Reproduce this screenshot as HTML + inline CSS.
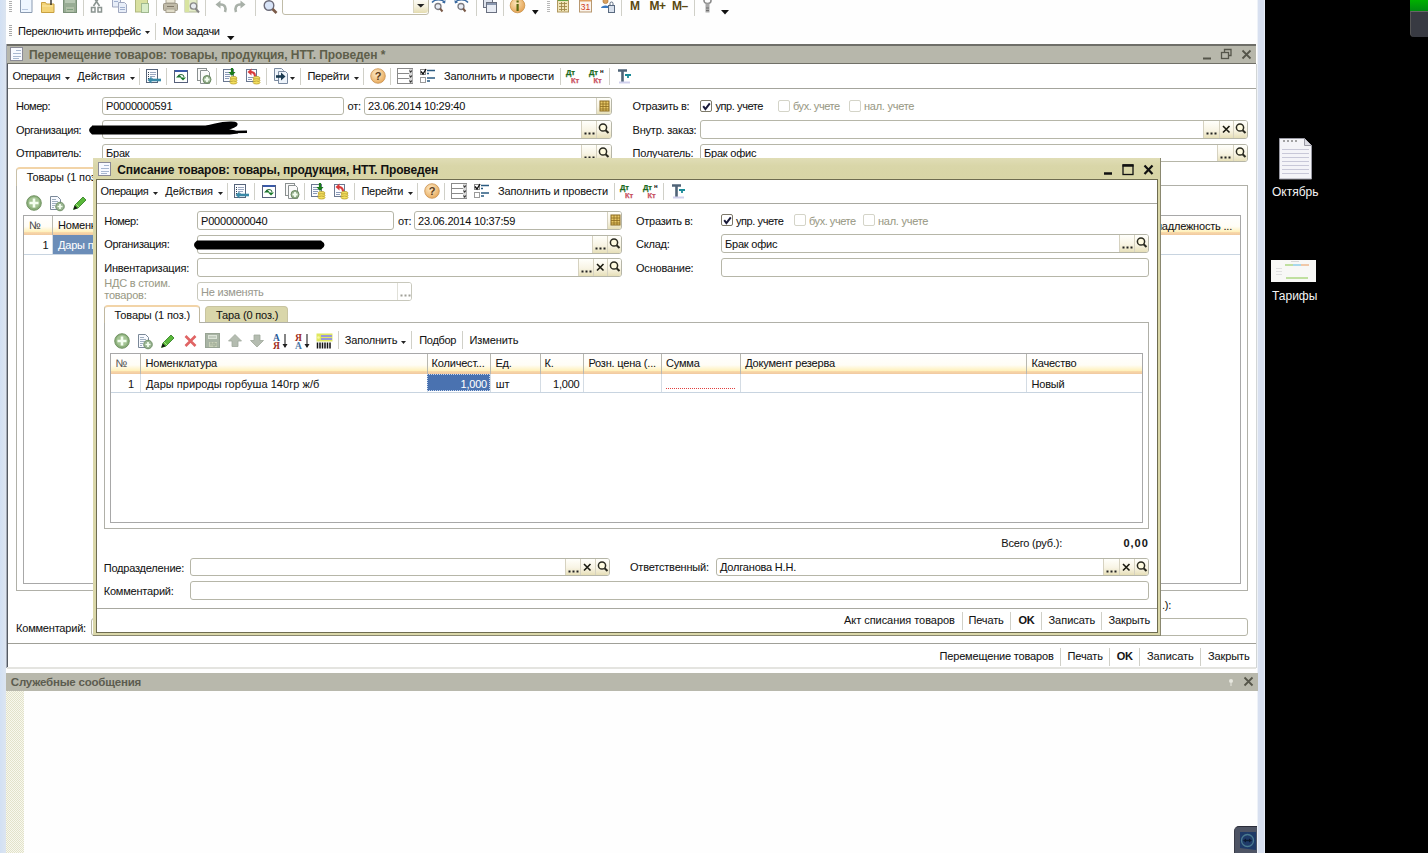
<!DOCTYPE html><html><head><meta charset="utf-8"><style>
*{margin:0;padding:0;box-sizing:content-box}
html,body{width:1428px;height:853px;overflow:hidden;background:#000}
body{position:relative;font-family:"Liberation Sans",sans-serif}
.a{position:absolute}
.t{position:absolute;font-size:11px;line-height:13px;letter-spacing:-0.2px;color:#141414;white-space:nowrap;-webkit-text-stroke:0.06px currentColor}
.g{color:#9a9a86}
.b{font-weight:bold}
.inp{position:absolute;border:1px solid #b6b6a8;border-radius:3px;background:#fff;overflow:hidden}
.ib{position:absolute;top:0;box-sizing:border-box;background:linear-gradient(#fffffb 0%,#f8f4e4 55%,#e6dfb8 100%);border-left:1px solid #d6d2c0}
.cb{position:absolute;width:10px;height:10px;border:1px solid #807c68;border-radius:2px;background:#fff}
</style></head><body>
<div class="a" style="left:1410px;top:0px;width:18px;height:11px;background:linear-gradient(#00b000,#008a10)"></div>
<div class="a" style="left:1410px;top:11px;width:18px;height:26px;background:#383a42;border-top:1px solid #666;border-left:1px solid #555;border-bottom-left-radius:4px;box-sizing:border-box"></div>
<svg class="a" style="left:1278px;top:137px" width="36" height="46"><path d="M1.5 1.5h25l7 7v33.5h-32z" fill="#f4f4f8" stroke="#9a9aa4"/><path d="M26.5 1.5v7h7" fill="#dcdce4" stroke="#9a9aa4"/><path d="M4 12.5h27M4 16.5h27M4 20.5h27M4 24.5h27M4 28.5h27M4 32.5h27M4 36.5h27" stroke="#c8c8d8"/><circle cx="6" cy="4" r="1" fill="#888"/><circle cx="10" cy="4" r="1" fill="#888"/><circle cx="14" cy="4" r="1" fill="#888"/><circle cx="18" cy="4" r="1" fill="#888"/></svg>
<div class="a" style="left:1272px;top:185px;font:12px/14px 'Liberation Sans';color:#f4f4f4">Октябрь</div>
<svg class="a" style="left:1271px;top:260px" width="46" height="22"><rect x="0" y="0" width="45" height="22" fill="#f8f8f6"/><rect x="14" y="4" width="8" height="2" fill="#c0e0a0"/><rect x="22" y="4" width="8" height="2" fill="#a8d8ec"/><rect x="30" y="4" width="8" height="2" fill="#f0c8a8"/><rect x="15" y="17" width="22" height="2" fill="#c0e0a0"/><path d="M5 8.5h6M5 11.5h6M5 14.5h6" stroke="#e0e0e0"/><rect x="20" y="1" width="8" height="1" fill="#d8d8d8"/></svg>
<div class="a" style="left:1272px;top:289px;font:12px/14px 'Liberation Sans';color:#f4f4f4">Тарифы</div>
<div class="a" style="left:0px;top:0px;width:6px;height:853px;background:linear-gradient(90deg,#d2e0f4,#dce5f0)"></div>
<div class="a" style="left:1257px;top:0px;width:8px;height:853px;background:linear-gradient(90deg,#eef2f8 0 1px,#d8e0f0 1px 7px,#e8eef8 7px)"></div>
<div class="a" style="left:6px;top:0px;width:1251px;height:853px;background:#fefefe"></div>
<svg class="a" style="left:9px;top:0" width="3" height="13"><path d="M0 1.5h3M0 3.5h3M0 5.5h3M0 7.5h3M0 9.5h3M0 11.5h3" stroke="#b0b0b0"/></svg>
<svg class="a" style="left:18.5px;top:0px;overflow:visible" width="16" height="16"><path d="M1.5 -4h8.5l3 3v13.5h-11.5z" fill="#eef6ff" stroke="#8a9ab0"/><path d="M3 9.5h6" stroke="#b8c8e0"/></svg>
<svg class="a" style="left:40px;top:0px;overflow:visible" width="16" height="16"><path d="M1.5 2.5h4l1 1.5h7.5v8.5h-12.5z" fill="#f4d478" stroke="#c8a040"/><path d="M2 6h11" stroke="#fae8a8"/><path d="M11 -3v8" stroke="#1a1a1a" stroke-width="1.3"/><path d="M9 -1l2-2.5 2 2.5z" fill="#1a1a1a"/></svg>
<svg class="a" style="left:62px;top:0px;overflow:visible" width="16" height="16"><rect x="1.5" y="-4" width="13" height="16.5" fill="#98ac94" stroke="#7a9078"/><rect x="3" y="-3" width="10" height="6" fill="#b8c8b4"/><rect x="4" y="7" width="8" height="5" fill="#b0c0a8"/><path d="M5 9.5h6" stroke="#80a080"/></svg>
<svg class="a" style="left:90px;top:0px;overflow:visible" width="16" height="16"><path d="M3.5 -3l6 9M9.5 -3l-6 9" stroke="#8a9490" stroke-width="1.6"/><rect x="1.5" y="7.5" width="3.5" height="4.5" fill="none" stroke="#8a9490" stroke-width="1.5"/><rect x="8" y="7.5" width="3.5" height="4.5" fill="none" stroke="#8a9490" stroke-width="1.5"/></svg>
<svg class="a" style="left:111px;top:0px;overflow:visible" width="16" height="16"><path d="M1.5 -3.5h6l2 2v8.5h-8z" fill="#e8eef8" stroke="#a0a8c0"/><path d="M7.5 2.5h6l2 2v8h-8z" fill="#e8eef8" stroke="#a0a8c0"/><path d="M3 1.5h4M9 7.5h5M9 9.5h5" stroke="#a0b0d0"/></svg>
<svg class="a" style="left:134px;top:0px;overflow:visible" width="16" height="16"><rect x="1.5" y="-3" width="12" height="15" fill="#d8e0a0" stroke="#b0b880"/><rect x="7.5" y="3.5" width="7" height="9" fill="#d8ecc8" stroke="#a0b890"/><rect x="5" y="-3" width="5" height="3" fill="#e8c890"/></svg>
<svg class="a" style="left:162px;top:0px;overflow:visible" width="16" height="16"><rect x="1.5" y="3.5" width="14" height="7" rx="1" fill="#c0baa8" stroke="#9a9484"/><rect x="4" y="-3" width="9" height="6" fill="#ece8d8" stroke="#aaa494"/><rect x="4" y="9" width="9" height="3.5" fill="#e0dcc8" stroke="#aaa494"/><path d="M5 6.5h7" stroke="#807868"/></svg>
<svg class="a" style="left:184px;top:0px;overflow:visible" width="16" height="16"><rect x="1" y="-3" width="12" height="15" fill="#e4ecc8" stroke="#b0b898"/><rect x="1" y="-3" width="4" height="15" fill="#d8e4a0"/><circle cx="9.5" cy="6" r="3.2" fill="#e8ecf0" stroke="#888" stroke-width="1.3"/><path d="M11.5 8.5l3.5 4" stroke="#888" stroke-width="2"/></svg>
<svg class="a" style="left:214px;top:0px;overflow:visible" width="16" height="16"><path d="M11 12c1.5-4 0-8-5-7.5" stroke="#a8b0a8" stroke-width="2.6" fill="none"/><path d="M1.5 4.5l5-4v8z" fill="#a8b0a8"/></svg>
<svg class="a" style="left:235px;top:0px;overflow:visible" width="16" height="16"><path d="M1 12c-1.5-4 0-8 5-7.5" stroke="#a8b0a8" stroke-width="2.6" fill="none"/><path d="M10.5 4.5l-5-4v8z" fill="#a8b0a8"/></svg>
<svg class="a" style="left:263px;top:0px;overflow:visible" width="16" height="16"><circle cx="6" cy="5.5" r="4.8" fill="#d8e4f8" stroke="#6a6a78" stroke-width="1.4"/><path d="M9.5 9l4 4" stroke="#7a5a48" stroke-width="2.6"/></svg>
<div class="a" style="left:83px;top:0px;width:1px;height:16px;background:#d0d0c8"></div>
<div class="a" style="left:156px;top:0px;width:1px;height:16px;background:#d0d0c8"></div>
<div class="a" style="left:205px;top:0px;width:1px;height:16px;background:#d0d0c8"></div>
<div class="a" style="left:255px;top:0px;width:1px;height:16px;background:#d0d0c8"></div>
<div class="a" style="left:282px;top:-4px;width:145px;height:17px;background:#fff;border:1px solid #c0bca8;border-radius:3px"></div>
<div class="a" style="left:413px;top:-3px;width:14px;height:16px;background:linear-gradient(#fff,#f4f0dc 60%,#e4dcb0);border-left:1px solid #d8d4c0;border-radius:0 0 3px 0"></div>
<svg class="a" style="left:417px;top:4px" width="8" height="4"><path d="M0 0h7.5L3.75 3.5z" fill="#222"/></svg>
<svg class="a" style="left:431px;top:0px;overflow:visible" width="16" height="16"><path d="M1 2.5c3-3.5 10-3.5 13 0" stroke="#3a6aa0" stroke-width="1.4" fill="none"/><path d="M14.5 0l-0.5 3.5-3 -1z" fill="#3a6aa0"/><circle cx="7" cy="6.5" r="3" fill="#e8ecf4" stroke="#7a7a80" stroke-width="1.3"/><path d="M9 8.5l2.5 3" stroke="#7a5a48" stroke-width="2"/></svg>
<svg class="a" style="left:454px;top:0px;overflow:visible" width="16" height="16"><path d="M1 2.5c3-3.5 10-3.5 13 0" stroke="#3a6aa0" stroke-width="1.4" fill="none"/><path d="M0.5 0l0.5 3.5 3-1z" fill="#3a6aa0"/><circle cx="7" cy="6.5" r="3" fill="#e8ecf4" stroke="#7a7a80" stroke-width="1.3"/><path d="M9 8.5l2.5 3" stroke="#7a5a48" stroke-width="2"/></svg>
<svg class="a" style="left:482px;top:0px;overflow:visible" width="16" height="16"><rect x="1.5" y="-1.5" width="9" height="9" fill="#dde2ec" stroke="#6a7080"/><rect x="4.5" y="2.5" width="10" height="10" fill="#e8ecf4" stroke="#6a7080"/><rect x="5" y="3" width="9" height="2" fill="#8a98b0"/></svg>
<svg class="a" style="left:510px;top:0px;overflow:visible" width="16" height="16"><defs><radialGradient id="ig" cx="0.4" cy="0.35" r="0.7"><stop offset="0" stop-color="#fbe4b8"/><stop offset="1" stop-color="#e4a050"/></radialGradient></defs><circle cx="7.5" cy="5.5" r="7.3" fill="url(#ig)" stroke="#c89048" stroke-width="0.8"/><rect x="6.5" y="4" width="2.2" height="7" fill="#5a6a10"/><rect x="6.5" y="0.5" width="2.2" height="2" fill="#5a6a10"/></svg>
<svg class="a" style="left:556px;top:0px;overflow:visible" width="16" height="16"><rect x="1.5" y="-2.5" width="11" height="14.5" fill="#f0e4b8" stroke="#b09860"/><rect x="2" y="-2" width="10" height="3" fill="#60a040"/><path d="M3 3.5h8M3 6.5h8M3 9.5h8M5.5 2v9M8.5 2v9" stroke="#a08848" stroke-width="0.9"/></svg>
<svg class="a" style="left:578px;top:0px;overflow:visible" width="16" height="16"><rect x="1.5" y="-1.5" width="12" height="13.5" fill="#fbf4ec" stroke="#b89870"/><rect x="2" y="-1" width="11" height="2.5" fill="#e0a060"/><text x="7.5" y="10" font-family="Liberation Sans" font-size="8.5" text-anchor="middle" fill="#d03a20">31</text></svg>
<svg class="a" style="left:600px;top:0px;overflow:visible" width="16" height="16"><circle cx="5.5" cy="1" r="2.6" fill="#d8a060" stroke="#a87030" stroke-width="0.6"/><path d="M1 8c0-3.5 9-3.5 9 0z" fill="#3a78c0"/><rect x="8.5" y="5.5" width="6" height="7" fill="#d8e0ec" stroke="#5a6a80"/><path d="M10 5.5v-2a1.5 1.5 0 0 1 3 0v2" fill="none" stroke="#5a6a80"/></svg>
<div class="a" style="left:476px;top:0px;width:1px;height:16px;background:#d0d0c8"></div>
<div class="a" style="left:503px;top:0px;width:1px;height:16px;background:#d0d0c8"></div>
<div class="a" style="left:621px;top:0px;width:1px;height:16px;background:#d0d0c8"></div>
<div class="a" style="left:694px;top:0px;width:1px;height:16px;background:#d0d0c8"></div>
<svg class="a" style="left:532px;top:10px" width="7" height="5"><path d="M0 0h6.6L3.3 4.4z" fill="#111"/></svg>
<svg class="a" style="left:547px;top:0px" width="3" height="13"><path d="M0 1.5h3M0 3.5h3M0 5.5h3M0 7.5h3M0 9.5h3M0 11.5h3" stroke="#b8b8b8"/></svg>
<div class="a" style="left:630px;top:-2px;font:bold 12px/16px 'Liberation Sans';color:#5a4810;letter-spacing:-0.3px">M</div>
<div class="a" style="left:649.5px;top:-2px;font:bold 12px/16px 'Liberation Sans';color:#5a4810;letter-spacing:-0.5px">M+</div>
<div class="a" style="left:672px;top:-2px;font:bold 12px/16px 'Liberation Sans';color:#5a4810;letter-spacing:-0.5px">M–</div>
<svg class="a" style="left:701px;top:0px;overflow:visible" width="16" height="16"><ellipse cx="6.5" cy="0.5" rx="3.5" ry="3" fill="none" stroke="#8a8a8a" stroke-width="1.6"/><path d="M6.5 3.5v9" stroke="#a8a8a8" stroke-width="4"/><path d="M5 8h3M5 10.5h3" stroke="#707070"/></svg>
<svg class="a" style="left:721px;top:10px" width="9" height="5"><path d="M0 0h8L4 4.4z" fill="#111"/></svg>
<svg class="a" style="left:9px;top:24px" width="3" height="14"><path d="M0 1.5h3M0 3.5h3M0 5.5h3M0 7.5h3M0 9.5h3M0 11.5h3" stroke="#a8a8a8"/></svg>
<div class="t " style="left:18px;top:24.5px;letter-spacing:-0.226px;">Переключить интерфейс</div>
<svg class="a" style="left:145px;top:30.5px" width="6" height="4"><path d="M0 0h5L2.5 3z" fill="#222"/></svg>
<div class="a" style="left:155px;top:23px;width:1px;height:17px;background:#d0d0c8"></div>
<div class="t " style="left:162.7px;top:24.5px;letter-spacing:-0.293px;">Мои задачи</div>
<svg class="a" style="left:227px;top:35.5px" width="8" height="5"><path d="M0 0h7.5L3.75 4.2z" fill="#111"/></svg>
<div class="a" style="left:7px;top:44px;width:1249px;height:624px;background:#fff"></div>
<div class="a" style="left:7px;top:44px;width:1px;height:624px;background:#545a62"></div>
<div class="a" style="left:6px;top:44px;width:1px;height:624px;background:#a4aab6"></div>
<div class="a" style="left:7px;top:44px;width:1249px;height:19px;background:#b7b7ab"></div>
<div class="a" style="left:7px;top:44px;width:1249px;height:2px;background:#6e6e68"></div>
<div class="a" style="left:7px;top:63px;width:1249px;height:1px;background:#707068"></div>
<svg class="a" style="left:10px;top:47px;overflow:visible" width="13" height="14"><rect x="0.5" y="0.5" width="12" height="13" fill="#f8faff" stroke="#8a8a96"/><path d="M6 3.5h5M3 6.5h8M3 9.5h8M3 11.5h6" stroke="#a8b8d0"/></svg>
<div class="t b" style="left:29px;top:47.5px;-webkit-text-stroke:0;font-size:12px;line-height:14px;color:#5e5e4a;letter-spacing:-0.06px">Перемещение товаров: товары, продукция, НТТ. Проведен *</div>
<svg class="a" style="left:1200px;top:47px" width="56" height="16"><path d="M3 11.5h8" stroke="#55554a" stroke-width="2"/><rect x="21.5" y="5.5" width="7" height="6" fill="none" stroke="#55554a" stroke-width="1.3"/><path d="M24.5 5V2.5h6.5v6H29" fill="none" stroke="#55554a" stroke-width="1.3"/><path d="M42.5 3.5l8 8M50.5 3.5l-8 8" stroke="#55554a" stroke-width="1.8"/></svg>
<div class="a" style="left:8px;top:88px;width:1248px;height:1px;background:#a4a49c"></div>
<div class="t " style="left:12.6px;top:70.0px;letter-spacing:-0.440px;">Операция</div>
<svg class="a" style="left:65px;top:76.5px" width="6" height="4"><path d="M0 0h5L2.5 3z" fill="#222"/></svg>
<div class="t " style="left:77.3px;top:70.0px;letter-spacing:-0.072px;">Действия</div>
<svg class="a" style="left:129.5px;top:76.5px" width="6" height="4"><path d="M0 0h5L2.5 3z" fill="#222"/></svg>
<div class="a" style="left:139px;top:68px;width:1px;height:17px;background:#d0d0c8"></div>
<svg class="a" style="left:145px;top:68px;overflow:visible" width="16" height="16"><rect x="1.5" y="1.5" width="11" height="13" fill="#fbfcff" stroke="#56647a"/><path d="M3 4.5h1M3 6.5h1M3 8.5h1M3 10.5h1" stroke="#304050"/><path d="M5 4.5h6M5 6.5h6M5 8.5h5M5 10.5h3" stroke="#9aa8c0"/><path d="M5 12h11" stroke="#3a8aa8" stroke-width="2.6"/><path d="M2.5 12l4-3.5v7z" fill="#3a8aa8"/></svg>
<div class="a" style="left:166px;top:68px;width:1px;height:17px;background:#d0d0c8"></div>
<svg class="a" style="left:173px;top:68px;overflow:visible" width="16" height="16"><rect x="1.5" y="2.5" width="13" height="12" fill="#fff" stroke="#56607a"/><rect x="2" y="2" width="12" height="2" fill="#3a5aa8"/><path d="M3 9.5l3-3 3 3z" fill="#1a7a2a"/><path d="M7 9.5l3 3 3-3z" fill="#1a7a2a"/><path d="M5 9a3 2.5 0 0 1 6 0" stroke="#2a6a3a" fill="none"/></svg>
<svg class="a" style="left:196px;top:68px;overflow:visible" width="16" height="16"><rect x="1.5" y="0.5" width="9" height="12" fill="#fafafa" stroke="#8a9090"/><path d="M4.5 2.5h7l2 2v11h-9z" fill="#fbfbfb" stroke="#8a9090"/><circle cx="11" cy="11.5" r="4" fill="#98b090" stroke="#6a8a60"/><path d="M8.5 11.5h5M11 9v5" stroke="#f4fff0" stroke-width="1.8"/></svg>
<div class="a" style="left:216px;top:68px;width:1px;height:17px;background:#d0d0c8"></div>
<svg class="a" style="left:222px;top:68px;overflow:visible" width="16" height="16"><rect x="1.5" y="1.5" width="10" height="12" fill="#fbfcff" stroke="#6a7890"/><path d="M3 4.5h6M3 6.5h6M3 8.5h5M3 10.5h4" stroke="#8a9ab8"/><path d="M10 0v5" stroke="#1a7a1a" stroke-width="2.2"/><path d="M6.5 4l3.5 4 3.5-4z" fill="#1a7a1a"/><ellipse cx="11.5" cy="10" rx="3.5" ry="1.6" fill="#f4e060" stroke="#b8a030" stroke-width="0.8"/><ellipse cx="11.5" cy="12.3" rx="3.5" ry="1.6" fill="#f4e060" stroke="#b8a030" stroke-width="0.8"/><ellipse cx="11.5" cy="14.5" rx="3.5" ry="1.5" fill="#f4e060" stroke="#b8a030" stroke-width="0.8"/></svg>
<svg class="a" style="left:245px;top:68px;overflow:visible" width="16" height="16"><rect x="1.5" y="1.5" width="10" height="12" fill="#fbfcff" stroke="#6a7890"/><path d="M3 9.5h5M3 11.5h4" stroke="#8a9ab8"/><path d="M10 8.5c0-3-1.5-4.5-4.5-4.5" stroke="#d83a3a" stroke-width="2.2" fill="none"/><path d="M2.5 4l4-3.5v7z" fill="#d83a3a"/><ellipse cx="11.5" cy="10" rx="3.5" ry="1.6" fill="#f4e060" stroke="#b8a030" stroke-width="0.8"/><ellipse cx="11.5" cy="12.3" rx="3.5" ry="1.6" fill="#f4e060" stroke="#b8a030" stroke-width="0.8"/><ellipse cx="11.5" cy="14.5" rx="3.5" ry="1.5" fill="#f4e060" stroke="#b8a030" stroke-width="0.8"/></svg>
<div class="a" style="left:266px;top:68px;width:1px;height:17px;background:#d0d0c8"></div>
<svg class="a" style="left:273px;top:68px;overflow:visible" width="16" height="16"><path d="M1.5 0.5h7l2 2v10h-9z" fill="#eef4fb" stroke="#7a8aa0"/><path d="M5.5 3.5h7l2 2v10h-9z" fill="#eef4fb" stroke="#7a8aa0"/><path d="M3 8.5h6" stroke="#1a3a50" stroke-width="2.6"/><path d="M8 4.5l4.5 4-4.5 4z" fill="#1a3a50"/></svg>
<svg class="a" style="left:290px;top:76.5px" width="6" height="4"><path d="M0 0h5L2.5 3z" fill="#222"/></svg>
<div class="a" style="left:300px;top:68px;width:1px;height:17px;background:#d0d0c8"></div>
<div class="t " style="left:307.4px;top:70.0px;letter-spacing:-0.249px;">Перейти</div>
<svg class="a" style="left:353.5px;top:76.5px" width="6" height="4"><path d="M0 0h5L2.5 3z" fill="#222"/></svg>
<div class="a" style="left:363px;top:68px;width:1px;height:17px;background:#d0d0c8"></div>
<svg class="a" style="left:369.5px;top:68px;overflow:visible" width="16" height="16"><defs><radialGradient id="hg" cx="0.4" cy="0.35" r="0.7"><stop offset="0" stop-color="#fdebc8"/><stop offset="1" stop-color="#e8a858"/></radialGradient></defs><circle cx="8" cy="8" r="7.3" fill="url(#hg)" stroke="#c89050" stroke-width="0.8"/><text x="8" y="12" font-family="Liberation Sans" font-size="11" font-weight="bold" text-anchor="middle" fill="#5a3a1a">?</text></svg>
<div class="a" style="left:390px;top:68px;width:1px;height:17px;background:#d0d0c8"></div>
<svg class="a" style="left:397px;top:68px;overflow:visible" width="16" height="16"><rect x="0.5" y="0.5" width="15" height="15" fill="#fff" stroke="#8a8a8a"/><path d="M1 5.5h14M1 10.5h14" stroke="#8a8a8a"/><rect x="12" y="1" width="3.5" height="14" fill="#d8d8d8"/><path d="M12.5 2.5l1.2 1.5 1.2-1.5M12.5 7.5l1.2 1.5 1.2-1.5M12.5 12.5l1.2 1.5 1.2-1.5" stroke="#303030" stroke-width="1.1" fill="none"/></svg>
<svg class="a" style="left:420px;top:68px;overflow:visible" width="16" height="16"><rect x="0.5" y="1.5" width="5" height="5" fill="#fff" stroke="#8a8a8a"/><path d="M1 3.5l2 2.5 3-5" stroke="#111" stroke-width="1.4" fill="none"/><rect x="0.5" y="9.5" width="5" height="5" fill="#fff" stroke="#9a9a9a"/><path d="M7 2.5h8M7 5.5h2M7 10h8M7 13h3" stroke="#2a5a80" stroke-width="1.6"/></svg>
<div class="t " style="left:444px;top:70.0px;letter-spacing:-0.152px;">Заполнить и провести</div>
<div class="a" style="left:560px;top:68px;width:1px;height:17px;background:#d0d0c8"></div>
<svg class="a" style="left:566px;top:68px;overflow:visible" width="16" height="16"><text x="0" y="7" font-family="Liberation Sans" font-size="7.5" font-weight="bold" fill="#1a6a20" stroke="#1a6a20" stroke-width="0.25">Дт</text><text x="5" y="14.8" font-family="Liberation Sans" font-size="7.5" font-weight="bold" fill="#c85060" stroke="#c85060" stroke-width="0.25">Кт</text></svg>
<svg class="a" style="left:589px;top:68px;overflow:visible" width="16" height="16"><text x="0" y="7" font-family="Liberation Sans" font-size="7.5" font-weight="bold" fill="#1a6a20" stroke="#1a6a20" stroke-width="0.25">Дт</text><text x="11" y="4.5" font-family="Liberation Sans" font-size="6" font-weight="bold" fill="#111">н</text><text x="4.5" y="14.8" font-family="Liberation Sans" font-size="7.5" font-weight="bold" fill="#c85060" stroke="#c85060" stroke-width="0.25">Кт</text></svg>
<div class="a" style="left:609px;top:68px;width:1px;height:17px;background:#d0d0c8"></div>
<svg class="a" style="left:617px;top:68px;overflow:visible" width="16" height="16"><path d="M1 2.5h9M5.5 2v12" stroke="#506478" stroke-width="2.6"/><path d="M8 7h6M11 7v3" stroke="#1a8a98" stroke-width="1.8"/><path d="M2 14.5h11" stroke="#d0d0ec" stroke-width="2"/></svg>
<div class="t " style="left:16px;top:100.0px;letter-spacing:-0.484px;">Номер:</div>
<div class="inp" style="left:102px;top:97px;width:240px;height:16px;border-color:#b6b6a8">
<div class="t" style="left:3px;top:2.0px;color:#111">P0000000591</div>
</div>
<div class="t " style="left:347.5px;top:100.0px;">от:</div>
<div class="inp" style="left:364px;top:97px;width:246px;height:16px;border-color:#b6b6a8">
<div class="t" style="left:3px;top:2.0px;color:#111">23.06.2014 10:29:40</div>
<div class="ib" style="left:231px;width:15px;height:16px"><svg width="14" height="16" style="position:absolute;left:0;top:0"><rect x="3" y="3" width="9" height="10" fill="#e8c868" stroke="#8a6a20" stroke-width="1"/><path d="M3 6h9M3 8.5h9M3 11h9M6 3v10M9 3v10" stroke="#8a6a20" stroke-width="0.8"/></svg></div>
</div>
<div class="t " style="left:632.5px;top:100.0px;letter-spacing:-0.252px;">Отразить в:</div>
<div class="cb" style="left:700px;top:99.5px;border-color:#7c7868"><svg width="11" height="11" style="position:absolute;left:0;top:0"><path d="M2.2 5.2 L4.4 8 L8.8 2.3" stroke="#1a1a3a" stroke-width="2" fill="none"/></svg></div>
<div class="t " style="left:715.5px;top:100.0px;letter-spacing:-0.423px;">упр. учете</div>
<div class="cb" style="left:778px;top:99.5px;border-color:#d4d4c8"></div>
<div class="t g" style="left:793px;top:100.0px;letter-spacing:-0.465px;">бух. учете</div>
<div class="cb" style="left:849px;top:99.5px;border-color:#d4d4c8"></div>
<div class="t g" style="left:864px;top:100.0px;letter-spacing:-0.250px;">нал. учете</div>
<div class="t " style="left:16px;top:124.0px;letter-spacing:-0.346px;">Организация:</div>
<div class="inp" style="left:102px;top:120px;width:508px;height:17px;border-color:#b6b6a8">
<div class="t" style="left:3px;top:2.5px;color:#111"><span style="color:#bbb">ИП ...</span></div>
<div class="ib" style="left:493px;width:15px;height:17px"><svg width="14" height="16" style="position:absolute;left:0;top:0"><circle cx="6" cy="6.5" r="3.6" fill="#fffbe0" stroke="#2a2a20" stroke-width="1.5"/><path d="M8.6 9.2 L11.5 12" stroke="#2a2a20" stroke-width="2"/></svg></div>
<div class="ib" style="left:478px;width:15px;height:17px"><svg width="14" height="16" style="position:absolute;left:0;top:0"><rect x="2.5" y="11.5" width="2" height="2" fill="#222"/><rect x="6.5" y="11.5" width="2" height="2" fill="#222"/><rect x="10.5" y="11.5" width="2" height="2" fill="#222"/></svg></div>
</div>
<div class="t " style="left:632.5px;top:124.0px;">Внутр. заказ:</div>
<div class="inp" style="left:700px;top:120px;width:546px;height:17px;border-color:#b6b6a8">
<div class="ib" style="left:532px;width:14px;height:17px"><svg width="14" height="16" style="position:absolute;left:0;top:0"><circle cx="6" cy="6.5" r="3.6" fill="#fffbe0" stroke="#2a2a20" stroke-width="1.5"/><path d="M8.6 9.2 L11.5 12" stroke="#2a2a20" stroke-width="2"/></svg></div>
<div class="ib" style="left:518px;width:14px;height:17px"><svg width="14" height="16" style="position:absolute;left:0;top:0"><path d="M3 5 L9.5 11.5 M9.5 5 L3 11.5" stroke="#1a1a10" stroke-width="1.6"/></svg></div>
<div class="ib" style="left:502px;width:16px;height:17px"><svg width="14" height="16" style="position:absolute;left:0;top:0"><rect x="2.5" y="11.5" width="2" height="2" fill="#222"/><rect x="6.5" y="11.5" width="2" height="2" fill="#222"/><rect x="10.5" y="11.5" width="2" height="2" fill="#222"/></svg></div>
</div>
<div class="t " style="left:16px;top:147.0px;letter-spacing:-0.369px;">Отправитель:</div>
<div class="inp" style="left:102px;top:144px;width:508px;height:16px;border-color:#b6b6a8">
<div class="t" style="left:3px;top:2.0px;color:#111">Брак</div>
<div class="ib" style="left:493px;width:15px;height:16px"><svg width="14" height="16" style="position:absolute;left:0;top:0"><circle cx="6" cy="6.5" r="3.6" fill="#fffbe0" stroke="#2a2a20" stroke-width="1.5"/><path d="M8.6 9.2 L11.5 12" stroke="#2a2a20" stroke-width="2"/></svg></div>
<div class="ib" style="left:478px;width:15px;height:16px"><svg width="14" height="16" style="position:absolute;left:0;top:0"><rect x="2.5" y="11.5" width="2" height="2" fill="#222"/><rect x="6.5" y="11.5" width="2" height="2" fill="#222"/><rect x="10.5" y="11.5" width="2" height="2" fill="#222"/></svg></div>
</div>
<div class="t " style="left:632.5px;top:147.0px;">Получатель:</div>
<div class="inp" style="left:700px;top:144px;width:546px;height:16px;border-color:#b6b6a8">
<div class="t" style="left:3px;top:2.0px;color:#111">Брак офис</div>
<div class="ib" style="left:532px;width:14px;height:16px"><svg width="14" height="16" style="position:absolute;left:0;top:0"><circle cx="6" cy="6.5" r="3.6" fill="#fffbe0" stroke="#2a2a20" stroke-width="1.5"/><path d="M8.6 9.2 L11.5 12" stroke="#2a2a20" stroke-width="2"/></svg></div>
<div class="ib" style="left:516px;width:16px;height:16px"><svg width="14" height="16" style="position:absolute;left:0;top:0"><rect x="2.5" y="11.5" width="2" height="2" fill="#222"/><rect x="6.5" y="11.5" width="2" height="2" fill="#222"/><rect x="10.5" y="11.5" width="2" height="2" fill="#222"/></svg></div>
</div>
<svg class="a" style="left:80px;top:115px" width="175" height="25"><path d="M12 11 Q6 15 12 19.5 L150 19.5 L158 18.5 Q160 16 150 14.5 Q146 12 135 10.5 L12 10.5Z" fill="#000"/><path d="M120 13 Q135 7 150 6.5 Q160 6 157 11 Q152 15 140 16 L120 16Z" fill="#000"/><path d="M110 16.5 L167 15.5 L167 18 L110 19Z" fill="#000"/></svg>
<div class="a" style="left:16px;top:185px;width:1232px;height:406px;border:1px solid #b0b0a8;background:#fff;box-sizing:border-box"></div>
<div class="a" style="left:16px;top:167px;width:100px;height:19px;border:1px solid #c8c0a8;border-top:2px solid #f2d4a8;border-bottom:none;border-radius:4px 4px 0 0;background:#fff;box-sizing:border-box"></div>
<div class="t " style="left:26.7px;top:171.0px;letter-spacing:-0.132px;">Товары (1 поз.)</div>
<svg class="a" style="left:26px;top:195px;overflow:visible" width="16" height="16"><circle cx="8" cy="8" r="7.3" fill="#8cb07c" stroke="#6a8c5a" stroke-width="0.9"/><circle cx="8" cy="7.5" r="5.5" fill="#a4c494"/><path d="M3.5 8h9M8 3.5v9" stroke="#f4fff0" stroke-width="2.6"/></svg>
<svg class="a" style="left:49px;top:195px;overflow:visible" width="16" height="16"><path d="M1.5 1.5h7l3 3v10h-10z" fill="#f8faff" stroke="#7a8898"/><path d="M3 4.5h4M3 6.5h6M3 8.5h5M3 10.5h3M3 12.5h2" stroke="#a0b0c0"/><circle cx="11" cy="11.5" r="4.3" fill="#98b490" stroke="#6a8a60" stroke-width="0.9"/><path d="M8.5 11.5h5M11 9v5" stroke="#f4fff0" stroke-width="1.7"/></svg>
<svg class="a" style="left:72px;top:195px;overflow:visible" width="16" height="16"><path d="M1.5 14.5l1.5-4.5 8-8 3 3-8 8z" fill="#5ab83a" stroke="#2a7a1a" stroke-width="0.8"/><path d="M4 9l3 3" stroke="#a8e880"/><path d="M1.5 14.5l1.3-4 2.7 2.7z" fill="#101010"/></svg>
<div class="a" style="left:23px;top:215px;width:1218px;height:369px;border:1px solid #a8a8a8;background:#fff;box-sizing:border-box"></div>
<div class="a" style="left:24px;top:216px;width:1216px;height:16px;background:linear-gradient(#fff 0%,#fffdf6 65%,#fff0b8 100%)"></div>
<div class="a" style="left:24px;top:232px;width:1216px;height:3px;background:linear-gradient(#fadcaa,#f0c8a0)"></div>
<div class="a" style="left:52px;top:216px;width:1px;height:19px;background:#b8b8b0"></div>
<div class="a" style="left:52px;top:235px;width:1px;height:19px;background:#d4dce4"></div>
<div class="a" style="left:24px;top:254px;width:1216px;height:1px;background:#c8d4e0"></div>
<div class="t " style="left:29px;top:219.0px;color:#444">№</div>
<div class="t " style="left:58px;top:219.0px;">Номенклатура</div>
<div class="t " style="left:42.5px;top:239.0px;">1</div>
<div class="a" style="left:53px;top:235px;width:40px;height:19px;background:#6b8db8"></div>
<div class="t " style="left:58px;top:239.0px;color:#fff">Дары природы</div>
<div class="t" style="left:1032px;top:220px;width:200px;text-align:right">Принадлежность ...</div>
<div class="t " style="left:1162px;top:599.0px;">.):</div>
<div class="t " style="left:16px;top:622.0px;">Комментарий:</div>
<div class="inp" style="left:91px;top:618px;width:1155px;height:16px;border-color:#b6b6a8">
</div>
<div class="a" style="left:8px;top:643px;width:1248px;height:1px;background:#a0a098"></div>
<div class="t " style="left:939.5px;top:650.0px;letter-spacing:-0.168px;">Перемещение товаров</div>
<div class="a" style="left:1060px;top:648px;width:1px;height:18px;background:#d0d0c8"></div>
<div class="t " style="left:1067.6px;top:650.0px;letter-spacing:-0.149px;">Печать</div>
<div class="a" style="left:1109px;top:648px;width:1px;height:18px;background:#d0d0c8"></div>
<div class="t b" style="left:1116.7px;top:650.0px;">OK</div>
<div class="a" style="left:1139px;top:648px;width:1px;height:18px;background:#d0d0c8"></div>
<div class="t " style="left:1147px;top:650.0px;letter-spacing:-0.031px;">Записать</div>
<div class="a" style="left:1200px;top:648px;width:1px;height:18px;background:#d0d0c8"></div>
<div class="t " style="left:1208px;top:650.0px;letter-spacing:-0.096px;">Закрыть</div>
<div class="a" style="left:7px;top:667px;width:1249px;height:2px;background:#e4e4e0"></div>
<div class="a" style="left:1256px;top:64px;width:1px;height:604px;background:#d2d6d6"></div>
<div class="a" style="left:6px;top:673px;width:1252px;height:18px;background:#b8b8ac"></div>
<div class="t b" style="left:10.8px;top:675px;-webkit-text-stroke:0;font-size:11.5px;line-height:14px;color:#5c5c50">Служебные сообщения</div>
<svg class="a" style="left:1225px;top:674px" width="32" height="16"><circle cx="6" cy="7" r="2" fill="#e8e8e0"/><path d="M6 9v3" stroke="#e8e8e0"/><path d="M19.5 3.5l8 8M27.5 3.5l-8 8" stroke="#55554a" stroke-width="1.8"/></svg>
<div class="a" style="left:6px;top:691px;width:18px;height:162px;background:repeating-conic-gradient(#e2e2ca 0 25%, #f8f8ee 0 50%) 0 0/2px 2px"></div>
<div class="a" style="left:1234px;top:826px;width:23px;height:27px;background:#4e5464;border-top:1px solid #2a2c38;border-left:1px solid #3a3c48;border-radius:5px 0 0 0;box-sizing:border-box"></div>
<svg class="a" style="left:1239px;top:831px" width="18" height="20"><path d="M1 1h16v18l-16-2z" fill="#1e3a68"/><circle cx="8.5" cy="9.5" r="6" fill="none" stroke="#4a7a90" stroke-width="1.3"/><path d="M4 9.5l3-2v1.3h3v-1.3l3 2-3 2v-1.3h-3v1.3z" fill="#0a1a30"/></svg>
<div class="a" style="left:93px;top:158px;width:68px;height:0px;"></div>
<div class="a" style="left:93px;top:158px;width:1068px;height:478px;background:#dad7a9"></div>
<div class="a" style="left:93px;top:158px;width:1068px;height:20px;background:linear-gradient(#e0ddb6,#d9d6a8 40%,#d8d5a6)"></div>
<div class="a" style="left:96px;top:179px;width:1062px;height:454px;background:#fff;border:1px solid #6e6c50;box-sizing:border-box"></div>
<div class="a" style="left:1160px;top:158px;width:1px;height:478px;background:#8a8870"></div>
<div class="a" style="left:93px;top:635px;width:1068px;height:1px;background:#8a8870"></div>
<svg class="a" style="left:98px;top:162px;overflow:visible" width="13" height="14"><rect x="0.5" y="0.5" width="12" height="13" fill="#f8faff" stroke="#8a8a96"/><path d="M6 3.5h5M3 6.5h8M3 9.5h8M3 11.5h6" stroke="#a8b8d0"/></svg>
<div class="t b" style="left:117.3px;top:163px;-webkit-text-stroke:0;font-size:12px;line-height:14px;color:#111;letter-spacing:-0.12px">Списание товаров: товары, продукция, НТТ. Проведен</div>
<svg class="a" style="left:1100px;top:160px" width="58" height="18"><path d="M4 13.5h8" stroke="#111" stroke-width="2.5"/><rect x="23" y="5" width="10" height="9.5" fill="none" stroke="#111" stroke-width="1.3"/><path d="M22.5 5.5h11" stroke="#111" stroke-width="2.5"/><path d="M44.5 5.5l8 8.5M52.5 5.5l-8 8.5" stroke="#111" stroke-width="2.2"/></svg>
<div class="a" style="left:97px;top:203px;width:1060px;height:1px;background:#a8a8a0"></div>
<div class="t " style="left:100.6px;top:185.0px;letter-spacing:-0.440px;">Операция</div>
<svg class="a" style="left:153px;top:191.5px" width="6" height="4"><path d="M0 0h5L2.5 3z" fill="#222"/></svg>
<div class="t " style="left:165.3px;top:185.0px;letter-spacing:-0.072px;">Действия</div>
<svg class="a" style="left:217.5px;top:191.5px" width="6" height="4"><path d="M0 0h5L2.5 3z" fill="#222"/></svg>
<div class="a" style="left:227px;top:183px;width:1px;height:17px;background:#d0d0c8"></div>
<svg class="a" style="left:233px;top:183px;overflow:visible" width="16" height="16"><rect x="1.5" y="1.5" width="11" height="13" fill="#fbfcff" stroke="#56647a"/><path d="M3 4.5h1M3 6.5h1M3 8.5h1M3 10.5h1" stroke="#304050"/><path d="M5 4.5h6M5 6.5h6M5 8.5h5M5 10.5h3" stroke="#9aa8c0"/><path d="M5 12h11" stroke="#3a8aa8" stroke-width="2.6"/><path d="M2.5 12l4-3.5v7z" fill="#3a8aa8"/></svg>
<div class="a" style="left:254px;top:183px;width:1px;height:17px;background:#d0d0c8"></div>
<svg class="a" style="left:261px;top:183px;overflow:visible" width="16" height="16"><rect x="1.5" y="2.5" width="13" height="12" fill="#fff" stroke="#56607a"/><rect x="2" y="2" width="12" height="2" fill="#3a5aa8"/><path d="M3 9.5l3-3 3 3z" fill="#1a7a2a"/><path d="M7 9.5l3 3 3-3z" fill="#1a7a2a"/><path d="M5 9a3 2.5 0 0 1 6 0" stroke="#2a6a3a" fill="none"/></svg>
<svg class="a" style="left:284px;top:183px;overflow:visible" width="16" height="16"><rect x="1.5" y="0.5" width="9" height="12" fill="#fafafa" stroke="#8a9090"/><path d="M4.5 2.5h7l2 2v11h-9z" fill="#fbfbfb" stroke="#8a9090"/><circle cx="11" cy="11.5" r="4" fill="#98b090" stroke="#6a8a60"/><path d="M8.5 11.5h5M11 9v5" stroke="#f4fff0" stroke-width="1.8"/></svg>
<div class="a" style="left:304px;top:183px;width:1px;height:17px;background:#d0d0c8"></div>
<svg class="a" style="left:310px;top:183px;overflow:visible" width="16" height="16"><rect x="1.5" y="1.5" width="10" height="12" fill="#fbfcff" stroke="#6a7890"/><path d="M3 4.5h6M3 6.5h6M3 8.5h5M3 10.5h4" stroke="#8a9ab8"/><path d="M10 0v5" stroke="#1a7a1a" stroke-width="2.2"/><path d="M6.5 4l3.5 4 3.5-4z" fill="#1a7a1a"/><ellipse cx="11.5" cy="10" rx="3.5" ry="1.6" fill="#f4e060" stroke="#b8a030" stroke-width="0.8"/><ellipse cx="11.5" cy="12.3" rx="3.5" ry="1.6" fill="#f4e060" stroke="#b8a030" stroke-width="0.8"/><ellipse cx="11.5" cy="14.5" rx="3.5" ry="1.5" fill="#f4e060" stroke="#b8a030" stroke-width="0.8"/></svg>
<svg class="a" style="left:333px;top:183px;overflow:visible" width="16" height="16"><rect x="1.5" y="1.5" width="10" height="12" fill="#fbfcff" stroke="#6a7890"/><path d="M3 9.5h5M3 11.5h4" stroke="#8a9ab8"/><path d="M10 8.5c0-3-1.5-4.5-4.5-4.5" stroke="#d83a3a" stroke-width="2.2" fill="none"/><path d="M2.5 4l4-3.5v7z" fill="#d83a3a"/><ellipse cx="11.5" cy="10" rx="3.5" ry="1.6" fill="#f4e060" stroke="#b8a030" stroke-width="0.8"/><ellipse cx="11.5" cy="12.3" rx="3.5" ry="1.6" fill="#f4e060" stroke="#b8a030" stroke-width="0.8"/><ellipse cx="11.5" cy="14.5" rx="3.5" ry="1.5" fill="#f4e060" stroke="#b8a030" stroke-width="0.8"/></svg>
<div class="a" style="left:354px;top:183px;width:1px;height:17px;background:#d0d0c8"></div>
<div class="t " style="left:361.4px;top:185.0px;letter-spacing:-0.249px;">Перейти</div>
<svg class="a" style="left:407.5px;top:191.5px" width="6" height="4"><path d="M0 0h5L2.5 3z" fill="#222"/></svg>
<div class="a" style="left:417px;top:183px;width:1px;height:17px;background:#d0d0c8"></div>
<svg class="a" style="left:423.5px;top:183px;overflow:visible" width="16" height="16"><defs><radialGradient id="hg" cx="0.4" cy="0.35" r="0.7"><stop offset="0" stop-color="#fdebc8"/><stop offset="1" stop-color="#e8a858"/></radialGradient></defs><circle cx="8" cy="8" r="7.3" fill="url(#hg)" stroke="#c89050" stroke-width="0.8"/><text x="8" y="12" font-family="Liberation Sans" font-size="11" font-weight="bold" text-anchor="middle" fill="#5a3a1a">?</text></svg>
<div class="a" style="left:444px;top:183px;width:1px;height:17px;background:#d0d0c8"></div>
<svg class="a" style="left:451px;top:183px;overflow:visible" width="16" height="16"><rect x="0.5" y="0.5" width="15" height="15" fill="#fff" stroke="#8a8a8a"/><path d="M1 5.5h14M1 10.5h14" stroke="#8a8a8a"/><rect x="12" y="1" width="3.5" height="14" fill="#d8d8d8"/><path d="M12.5 2.5l1.2 1.5 1.2-1.5M12.5 7.5l1.2 1.5 1.2-1.5M12.5 12.5l1.2 1.5 1.2-1.5" stroke="#303030" stroke-width="1.1" fill="none"/></svg>
<svg class="a" style="left:474px;top:183px;overflow:visible" width="16" height="16"><rect x="0.5" y="1.5" width="5" height="5" fill="#fff" stroke="#8a8a8a"/><path d="M1 3.5l2 2.5 3-5" stroke="#111" stroke-width="1.4" fill="none"/><rect x="0.5" y="9.5" width="5" height="5" fill="#fff" stroke="#9a9a9a"/><path d="M7 2.5h8M7 5.5h2M7 10h8M7 13h3" stroke="#2a5a80" stroke-width="1.6"/></svg>
<div class="t " style="left:498px;top:185.0px;letter-spacing:-0.152px;">Заполнить и провести</div>
<div class="a" style="left:614px;top:183px;width:1px;height:17px;background:#d0d0c8"></div>
<svg class="a" style="left:620px;top:183px;overflow:visible" width="16" height="16"><text x="0" y="7" font-family="Liberation Sans" font-size="7.5" font-weight="bold" fill="#1a6a20" stroke="#1a6a20" stroke-width="0.25">Дт</text><text x="5" y="14.8" font-family="Liberation Sans" font-size="7.5" font-weight="bold" fill="#c85060" stroke="#c85060" stroke-width="0.25">Кт</text></svg>
<svg class="a" style="left:643px;top:183px;overflow:visible" width="16" height="16"><text x="0" y="7" font-family="Liberation Sans" font-size="7.5" font-weight="bold" fill="#1a6a20" stroke="#1a6a20" stroke-width="0.25">Дт</text><text x="11" y="4.5" font-family="Liberation Sans" font-size="6" font-weight="bold" fill="#111">н</text><text x="4.5" y="14.8" font-family="Liberation Sans" font-size="7.5" font-weight="bold" fill="#c85060" stroke="#c85060" stroke-width="0.25">Кт</text></svg>
<div class="a" style="left:663px;top:183px;width:1px;height:17px;background:#d0d0c8"></div>
<svg class="a" style="left:671px;top:183px;overflow:visible" width="16" height="16"><path d="M1 2.5h9M5.5 2v12" stroke="#506478" stroke-width="2.6"/><path d="M8 7h6M11 7v3" stroke="#1a8a98" stroke-width="1.8"/><path d="M2 14.5h11" stroke="#d0d0ec" stroke-width="2"/></svg>
<div class="t " style="left:104.2px;top:215.0px;letter-spacing:-0.484px;">Номер:</div>
<div class="inp" style="left:197px;top:211px;width:195px;height:17px;border-color:#b6b6a8">
<div class="t" style="left:3px;top:2.5px;color:#111">P0000000040</div>
</div>
<div class="t " style="left:398px;top:215.0px;">от:</div>
<div class="inp" style="left:414px;top:211px;width:206px;height:17px;border-color:#b6b6a8">
<div class="t" style="left:3px;top:2.5px;color:#111">23.06.2014 10:37:59</div>
<div class="ib" style="left:192px;width:14px;height:17px"><svg width="14" height="16" style="position:absolute;left:0;top:0"><rect x="3" y="3" width="9" height="10" fill="#e8c868" stroke="#8a6a20" stroke-width="1"/><path d="M3 6h9M3 8.5h9M3 11h9M6 3v10M9 3v10" stroke="#8a6a20" stroke-width="0.8"/></svg></div>
</div>
<div class="t " style="left:636px;top:215.0px;letter-spacing:-0.252px;">Отразить в:</div>
<div class="cb" style="left:721px;top:214.3px;border-color:#7c7868"><svg width="11" height="11" style="position:absolute;left:0;top:0"><path d="M2.2 5.2 L4.4 8 L8.8 2.3" stroke="#1a1a3a" stroke-width="2" fill="none"/></svg></div>
<div class="t " style="left:736px;top:215.0px;letter-spacing:-0.423px;">упр. учете</div>
<div class="cb" style="left:794px;top:214.3px;border-color:#d4d4c8"></div>
<div class="t g" style="left:809px;top:215.0px;letter-spacing:-0.465px;">бух. учете</div>
<div class="cb" style="left:863px;top:214.3px;border-color:#d4d4c8"></div>
<div class="t g" style="left:878px;top:215.0px;letter-spacing:-0.250px;">нал. учете</div>
<div class="t " style="left:104.2px;top:238.0px;letter-spacing:-0.346px;">Организация:</div>
<div class="inp" style="left:197px;top:235px;width:423px;height:17px;border-color:#b6b6a8">
<div class="t" style="left:3px;top:2.5px;color:#111"><span style="color:#bbb">ИП ...</span></div>
<div class="ib" style="left:409px;width:14px;height:17px"><svg width="14" height="16" style="position:absolute;left:0;top:0"><circle cx="6" cy="6.5" r="3.6" fill="#fffbe0" stroke="#2a2a20" stroke-width="1.5"/><path d="M8.6 9.2 L11.5 12" stroke="#2a2a20" stroke-width="2"/></svg></div>
<div class="ib" style="left:394px;width:15px;height:17px"><svg width="14" height="16" style="position:absolute;left:0;top:0"><rect x="2.5" y="11.5" width="2" height="2" fill="#222"/><rect x="6.5" y="11.5" width="2" height="2" fill="#222"/><rect x="10.5" y="11.5" width="2" height="2" fill="#222"/></svg></div>
</div>
<div class="t " style="left:636px;top:238.0px;">Склад:</div>
<div class="inp" style="left:721px;top:234px;width:426px;height:17px;border-color:#b6b6a8">
<div class="t" style="left:3px;top:2.5px;color:#111">Брак офис</div>
<div class="ib" style="left:412px;width:14px;height:17px"><svg width="14" height="16" style="position:absolute;left:0;top:0"><circle cx="6" cy="6.5" r="3.6" fill="#fffbe0" stroke="#2a2a20" stroke-width="1.5"/><path d="M8.6 9.2 L11.5 12" stroke="#2a2a20" stroke-width="2"/></svg></div>
<div class="ib" style="left:397px;width:15px;height:17px"><svg width="14" height="16" style="position:absolute;left:0;top:0"><rect x="2.5" y="11.5" width="2" height="2" fill="#222"/><rect x="6.5" y="11.5" width="2" height="2" fill="#222"/><rect x="10.5" y="11.5" width="2" height="2" fill="#222"/></svg></div>
</div>
<div class="t " style="left:104.2px;top:261.5px;">Инвентаризация:</div>
<div class="inp" style="left:197px;top:258px;width:423px;height:17px;border-color:#b6b6a8">
<div class="ib" style="left:409px;width:14px;height:17px"><svg width="14" height="16" style="position:absolute;left:0;top:0"><circle cx="6" cy="6.5" r="3.6" fill="#fffbe0" stroke="#2a2a20" stroke-width="1.5"/><path d="M8.6 9.2 L11.5 12" stroke="#2a2a20" stroke-width="2"/></svg></div>
<div class="ib" style="left:395px;width:14px;height:17px"><svg width="14" height="16" style="position:absolute;left:0;top:0"><path d="M3 5 L9.5 11.5 M9.5 5 L3 11.5" stroke="#1a1a10" stroke-width="1.6"/></svg></div>
<div class="ib" style="left:380px;width:15px;height:17px"><svg width="14" height="16" style="position:absolute;left:0;top:0"><rect x="2.5" y="11.5" width="2" height="2" fill="#222"/><rect x="6.5" y="11.5" width="2" height="2" fill="#222"/><rect x="10.5" y="11.5" width="2" height="2" fill="#222"/></svg></div>
</div>
<div class="t " style="left:636px;top:261.5px;">Основание:</div>
<div class="inp" style="left:721px;top:258px;width:426px;height:17px;border-color:#b6b6a8">
</div>
<div class="t g" style="left:104.2px;top:276.5px;">НДС в стоим.</div>
<div class="t g" style="left:104.2px;top:289.0px;">товаров:</div>
<div class="inp" style="left:197px;top:282px;width:213px;height:17px;border-color:#c8c8bc">
<div class="t" style="left:3px;top:2.5px;color:#111"><span style="color:#9a9a90">Не изменять</span></div>
<div class="ib" style="left:199px;width:14px;height:17px;background:#fff;border-left-color:#e0e0d8"><svg width="14" height="16" style="position:absolute;left:0;top:0"><rect x="2.5" y="11.5" width="2" height="2" fill="#a0a098"/><rect x="6.5" y="11.5" width="2" height="2" fill="#a0a098"/><rect x="10.5" y="11.5" width="2" height="2" fill="#a0a098"/></svg></div>
</div>
<svg class="a" style="left:192px;top:238px" width="140" height="14"><path d="M5 2.5 Q-1 7 5 11.5 L129 11.5 Q136 7 129 2.5 Z" fill="#000"/></svg>
<div class="a" style="left:104px;top:322px;width:1045px;height:207px;border:1px solid #b0b0a8;background:#fff;box-sizing:border-box"></div>
<div class="a" style="left:205px;top:306px;width:83px;height:16px;border:1px solid #c8c4a0;border-bottom:none;border-radius:4px 4px 0 0;background:#d9d6aa;box-sizing:border-box"></div>
<div class="a" style="left:104px;top:305px;width:96px;height:18px;border:1px solid #c0b8a0;border-top:2px solid #f2d4a8;border-bottom:none;border-radius:4px 4px 0 0;background:#fff;box-sizing:border-box"></div>
<div class="t " style="left:114.6px;top:309.0px;letter-spacing:-0.132px;">Товары (1 поз.)</div>
<div class="t " style="left:216px;top:309.0px;letter-spacing:-0.149px;">Тара (0 поз.)</div>
<svg class="a" style="left:114px;top:333px;overflow:visible" width="16" height="16"><circle cx="8" cy="8" r="7.3" fill="#8cb07c" stroke="#6a8c5a" stroke-width="0.9"/><circle cx="8" cy="7.5" r="5.5" fill="#a4c494"/><path d="M3.5 8h9M8 3.5v9" stroke="#f4fff0" stroke-width="2.6"/></svg>
<svg class="a" style="left:137px;top:333px;overflow:visible" width="16" height="16"><path d="M1.5 1.5h7l3 3v10h-10z" fill="#f8faff" stroke="#7a8898"/><path d="M3 4.5h4M3 6.5h6M3 8.5h5M3 10.5h3M3 12.5h2" stroke="#a0b0c0"/><circle cx="11" cy="11.5" r="4.3" fill="#98b490" stroke="#6a8a60" stroke-width="0.9"/><path d="M8.5 11.5h5M11 9v5" stroke="#f4fff0" stroke-width="1.7"/></svg>
<svg class="a" style="left:160px;top:333px;overflow:visible" width="16" height="16"><path d="M1.5 14.5l1.5-4.5 8-8 3 3-8 8z" fill="#5ab83a" stroke="#2a7a1a" stroke-width="0.8"/><path d="M4 9l3 3" stroke="#a8e880"/><path d="M1.5 14.5l1.3-4 2.7 2.7z" fill="#101010"/></svg>
<svg class="a" style="left:183px;top:333px;overflow:visible" width="16" height="16"><path d="M2.5 3l10 10M12.5 3l-10 10" stroke="#e06464" stroke-width="2.6"/></svg>
<svg class="a" style="left:204.5px;top:333px;overflow:visible" width="16" height="16"><rect x="0.5" y="0.5" width="14" height="14" fill="#a8b4a4" stroke="#98a494"/><rect x="3" y="2" width="9" height="4" fill="#dce4d8"/><rect x="4" y="3.5" width="7" height="1" fill="#a8b4a4"/><rect x="4" y="9" width="8" height="5" fill="#c8d0b8"/><path d="M5 10h2M6 10v3M8 10h2v3h-2zM11 10v3" stroke="#98a490" stroke-width="0.8" fill="none"/></svg>
<svg class="a" style="left:227.5px;top:333px;overflow:visible" width="16" height="16"><path d="M7 1.5l6.5 6.5h-3.5v5.5h-6v-5.5h-3.5z" fill="#b4bcb0" stroke="#a0a89c" stroke-width="0.8"/></svg>
<svg class="a" style="left:249.5px;top:333px;overflow:visible" width="16" height="16"><path d="M7 14l6.5-6.5h-3.5v-5.5h-6v5.5h-3.5z" fill="#b4bcb0" stroke="#a0a89c" stroke-width="0.8"/></svg>
<svg class="a" style="left:272.5px;top:333px;overflow:visible" width="16" height="16"><text x="0" y="7.5" font-family="Liberation Serif" font-size="9.5" font-weight="bold" fill="#2a5a98">A</text><text x="0" y="15.5" font-family="Liberation Serif" font-size="9.5" font-weight="bold" fill="#a02a20">Я</text><path d="M12 1v13" stroke="#202020" stroke-width="1.1"/><path d="M9.5 11l2.5 4 2.5-4z" fill="#202020"/></svg>
<svg class="a" style="left:294.5px;top:333px;overflow:visible" width="16" height="16"><text x="0" y="7.5" font-family="Liberation Serif" font-size="9.5" font-weight="bold" fill="#a02a20">Я</text><text x="0" y="15.5" font-family="Liberation Serif" font-size="9.5" font-weight="bold" fill="#4a7aa8">A</text><path d="M12 1v13" stroke="#202020" stroke-width="1.1"/><path d="M9.5 11l2.5 4 2.5-4z" fill="#202020"/></svg>
<svg class="a" style="left:316px;top:333px;overflow:visible" width="16" height="16"><rect x="0.5" y="0.5" width="16" height="8" fill="#e0e860"/><rect x="5" y="2" width="11" height="2" fill="#9898d8"/><rect x="5" y="5" width="11" height="2" fill="#9898d8"/><circle cx="2.5" cy="4.5" r="1.3" fill="#f8f8a0"/><rect x="0.5" y="9" width="16" height="7" fill="#fff"/><path d="M1.5 9.5v6M4 9.5v6M6.5 9.5v6M9 9.5v6M11.5 9.5v6M14 9.5v6" stroke="#111" stroke-width="1.5"/></svg>
<div class="a" style="left:338px;top:331px;width:1px;height:18px;background:#d0d0c8"></div>
<div class="t " style="left:344.7px;top:334.0px;letter-spacing:-0.152px;">Заполнить</div>
<svg class="a" style="left:401px;top:340.5px" width="6" height="4"><path d="M0 0h5L2.5 3z" fill="#222"/></svg>
<div class="a" style="left:411px;top:331px;width:1px;height:18px;background:#d0d0c8"></div>
<div class="t " style="left:419.3px;top:334.0px;letter-spacing:-0.350px;">Подбор</div>
<div class="a" style="left:462px;top:331px;width:1px;height:18px;background:#d0d0c8"></div>
<div class="t " style="left:469.4px;top:334.0px;letter-spacing:-0.061px;">Изменить</div>
<div class="a" style="left:110px;top:353px;width:1033px;height:170px;border:1px solid #a8a8a8;background:#fff;box-sizing:border-box"></div>
<div class="a" style="left:111px;top:354px;width:1031px;height:17px;background:linear-gradient(#fff 0%,#fffdf6 65%,#fff0b8 100%)"></div>
<div class="a" style="left:111px;top:371px;width:1031px;height:3px;background:linear-gradient(#fadcaa,#f0c8a0)"></div>
<div class="a" style="left:140px;top:354px;width:1px;height:20px;background:#b8b8b0"></div>
<div class="a" style="left:140px;top:374px;width:1px;height:18px;background:#d4dce4"></div>
<div class="a" style="left:427px;top:354px;width:1px;height:20px;background:#b8b8b0"></div>
<div class="a" style="left:427px;top:374px;width:1px;height:18px;background:#d4dce4"></div>
<div class="a" style="left:490px;top:354px;width:1px;height:20px;background:#b8b8b0"></div>
<div class="a" style="left:490px;top:374px;width:1px;height:18px;background:#d4dce4"></div>
<div class="a" style="left:540px;top:354px;width:1px;height:20px;background:#b8b8b0"></div>
<div class="a" style="left:540px;top:374px;width:1px;height:18px;background:#d4dce4"></div>
<div class="a" style="left:583px;top:354px;width:1px;height:20px;background:#b8b8b0"></div>
<div class="a" style="left:583px;top:374px;width:1px;height:18px;background:#d4dce4"></div>
<div class="a" style="left:661px;top:354px;width:1px;height:20px;background:#b8b8b0"></div>
<div class="a" style="left:661px;top:374px;width:1px;height:18px;background:#d4dce4"></div>
<div class="a" style="left:740px;top:354px;width:1px;height:20px;background:#b8b8b0"></div>
<div class="a" style="left:740px;top:374px;width:1px;height:18px;background:#d4dce4"></div>
<div class="a" style="left:1026px;top:354px;width:1px;height:20px;background:#b8b8b0"></div>
<div class="a" style="left:1026px;top:374px;width:1px;height:18px;background:#d4dce4"></div>
<div class="a" style="left:111px;top:392px;width:1031px;height:1px;background:#c8d4e0"></div>
<div class="t " style="left:115.5px;top:357.0px;color:#555">№</div>
<div class="t " style="left:145.6px;top:357.0px;">Номенклатура</div>
<div class="t " style="left:431.6px;top:357.0px;">Количест...</div>
<div class="t " style="left:495.4px;top:357.0px;">Ед.</div>
<div class="t " style="left:544.5px;top:357.0px;">К.</div>
<div class="t " style="left:588.4px;top:357.0px;">Розн. цена (...</div>
<div class="t " style="left:666px;top:357.0px;">Сумма</div>
<div class="t " style="left:745.2px;top:357.0px;">Документ резерва</div>
<div class="t " style="left:1031.5px;top:357.0px;">Качество</div>
<div class="t " style="left:128px;top:377.5px;">1</div>
<div class="t " style="left:146px;top:377.5px;letter-spacing:0.043px;">Дары природы горбуша 140гр ж/б</div>
<div class="a" style="left:427px;top:374px;width:63px;height:17px;background:#4a72b0;outline:1px dotted #c8d8f0;outline-offset:-1px"></div>
<div class="t" style="left:427px;top:377.5px;width:60px;text-align:right;color:#fff">1,000</div>
<div class="t " style="left:495.8px;top:377.5px;">шт</div>
<div class="t" style="left:540px;top:377.5px;width:39.5px;text-align:right">1,000</div>
<div class="a" style="left:666px;top:388px;width:70px;height:1px;background:repeating-linear-gradient(90deg,#e04040 0 1px,transparent 1px 2px)"></div>
<div class="t " style="left:1031.5px;top:377.5px;">Новый</div>
<div class="t " style="left:1001.3px;top:537.0px;letter-spacing:-0.189px;">Всего (руб.):</div>
<div class="t b" style="left:1100px;top:537px;width:48.8px;text-align:right;letter-spacing:1px">0,00</div>
<div class="t " style="left:103.7px;top:561.5px;">Подразделение:</div>
<div class="inp" style="left:190px;top:558px;width:418px;height:16px;border-color:#b6b6a8">
<div class="ib" style="left:404px;width:14px;height:16px"><svg width="14" height="16" style="position:absolute;left:0;top:0"><circle cx="6" cy="6.5" r="3.6" fill="#fffbe0" stroke="#2a2a20" stroke-width="1.5"/><path d="M8.6 9.2 L11.5 12" stroke="#2a2a20" stroke-width="2"/></svg></div>
<div class="ib" style="left:389px;width:15px;height:16px"><svg width="14" height="16" style="position:absolute;left:0;top:0"><path d="M3 5 L9.5 11.5 M9.5 5 L3 11.5" stroke="#1a1a10" stroke-width="1.6"/></svg></div>
<div class="ib" style="left:374px;width:15px;height:16px"><svg width="14" height="16" style="position:absolute;left:0;top:0"><rect x="2.5" y="11.5" width="2" height="2" fill="#222"/><rect x="6.5" y="11.5" width="2" height="2" fill="#222"/><rect x="10.5" y="11.5" width="2" height="2" fill="#222"/></svg></div>
</div>
<div class="t " style="left:630px;top:561.0px;">Ответственный:</div>
<div class="inp" style="left:716px;top:558px;width:431px;height:16px;border-color:#b6b6a8">
<div class="t" style="left:3px;top:2.0px;color:#111">Долганова Н.Н.</div>
<div class="ib" style="left:417px;width:14px;height:16px"><svg width="14" height="16" style="position:absolute;left:0;top:0"><circle cx="6" cy="6.5" r="3.6" fill="#fffbe0" stroke="#2a2a20" stroke-width="1.5"/><path d="M8.6 9.2 L11.5 12" stroke="#2a2a20" stroke-width="2"/></svg></div>
<div class="ib" style="left:402px;width:15px;height:16px"><svg width="14" height="16" style="position:absolute;left:0;top:0"><path d="M3 5 L9.5 11.5 M9.5 5 L3 11.5" stroke="#1a1a10" stroke-width="1.6"/></svg></div>
<div class="ib" style="left:386px;width:16px;height:16px"><svg width="14" height="16" style="position:absolute;left:0;top:0"><rect x="2.5" y="11.5" width="2" height="2" fill="#222"/><rect x="6.5" y="11.5" width="2" height="2" fill="#222"/><rect x="10.5" y="11.5" width="2" height="2" fill="#222"/></svg></div>
</div>
<div class="t " style="left:103.7px;top:584.5px;">Комментарий:</div>
<div class="inp" style="left:190px;top:581px;width:957px;height:17px;border-color:#b6b6a8">
</div>
<div class="a" style="left:97px;top:608px;width:1060px;height:1px;background:#a8a8a0"></div>
<div class="t " style="left:844px;top:614.0px;letter-spacing:-0.046px;">Акт списания товаров</div>
<div class="a" style="left:962px;top:612px;width:1px;height:18px;background:#d0d0c8"></div>
<div class="t " style="left:968.5px;top:614.0px;letter-spacing:-0.149px;">Печать</div>
<div class="a" style="left:1010px;top:612px;width:1px;height:18px;background:#d0d0c8"></div>
<div class="t b" style="left:1018.4px;top:614.0px;">OK</div>
<div class="a" style="left:1041px;top:612px;width:1px;height:18px;background:#d0d0c8"></div>
<div class="t " style="left:1048.5px;top:614.0px;letter-spacing:-0.031px;">Записать</div>
<div class="a" style="left:1101px;top:612px;width:1px;height:18px;background:#d0d0c8"></div>
<div class="t " style="left:1108.5px;top:614.0px;letter-spacing:-0.096px;">Закрыть</div>
</body></html>
